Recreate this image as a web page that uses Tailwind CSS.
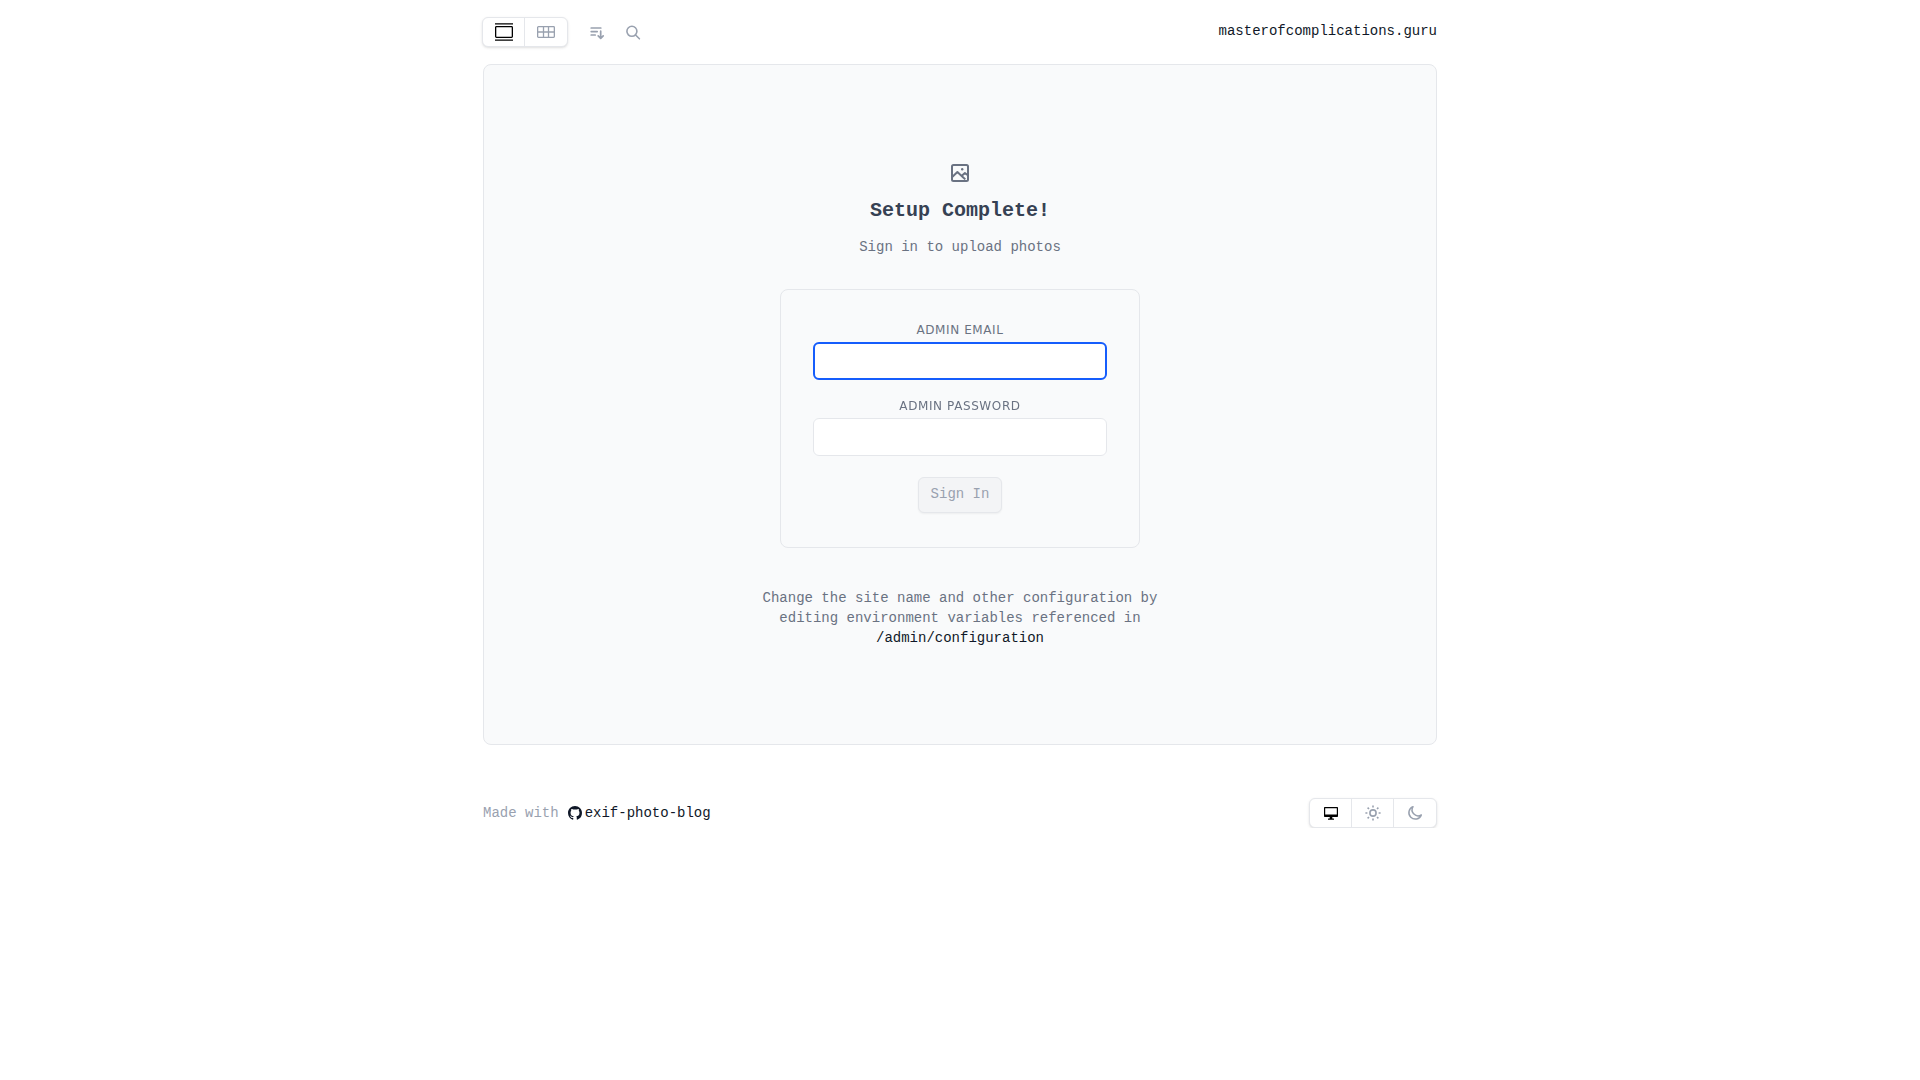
<!DOCTYPE html>
<html lang="en">
<head>
    <meta charset="UTF-8">
    <meta name="viewport" content="width=device-width, initial-scale=1.0">
    <title>masterofcomplications.guru</title>

    <!-- Tailwind CSS -->
    <script src="https://cdn.jsdelivr.net/npm/@tailwindcss/browser@4"></script>
</head>
<body class="bg-white font-['Liberation_Mono',monospace] text-sm text-gray-900">

    <div class="mx-auto w-full max-w-[954px]">

        <!-- Navigation -->
        <header class="flex h-16 items-center justify-between">
            <div class="flex items-center">
                <nav class="-ml-px flex h-[30px] overflow-hidden rounded-md border border-gray-200 bg-white shadow-sm">
                    <a href="#" aria-label="Full frame" class="flex w-[42px] items-center justify-center border-r border-gray-200 text-black">
                        <svg class="h-[18px] w-[19px]" viewBox="0 0 19 18" fill="none" stroke="currentColor">
                            <path d="M1 .9h18M1 17.100h18" stroke-width="1.400"/>
                            <rect x="1.650" y="3.650" width="16.700" height="10.700" rx=".8" stroke-width="1.300"/>
                        </svg>
                    </a>
                    <a href="#" aria-label="Grid" class="flex w-[42px] items-center justify-center text-gray-400 hover:text-gray-700">
                        <svg class="h-3 w-[18px]" viewBox="0 0 18 12" fill="none" stroke="currentColor" stroke-width="1.3">
                            <rect x=".65" y=".65" width="16.7" height="10.7" rx=".8"/>
                            <path d="M6.500.6v10.800M11.500.6v10.800M.6 6h16.800"/>
                        </svg>
                    </a>
                </nav>
                <button type="button" aria-label="Sort" class="ml-5 flex size-[18px] items-center justify-center text-gray-400 hover:text-gray-700">
                    <svg class="size-[18px]" viewBox="0 0 18 18" fill="none" stroke="currentColor" stroke-width="1.7" stroke-linecap="round" stroke-linejoin="round">
                        <path d="M3.200 5h9.600M3.200 8.600h6M3.200 12h4M12.700 8.200v6.800M10.200 12.800l2.500 2.500 2.500-2.500"/>
                    </svg>
                </button>
                <button type="button" aria-label="Search" class="ml-[18px] flex size-[18px] items-center justify-center text-gray-400 hover:text-gray-700">
                    <svg class="size-[18px]" viewBox="0 0 18 18" fill="none" stroke="currentColor" stroke-width="1.6" stroke-linecap="round">
                        <circle cx="7.900" cy="8.300" r="5"/>
                        <path d="M11.600 12l3.800 3.800"/>
                    </svg>
                </button>
            </div>
            <a href="#" class="pb-0.5 leading-5">masterofcomplications.guru</a>
        </header>

        <!-- Setup card -->
        <main class="flex flex-col items-center rounded-lg border border-gray-200 bg-gray-50 px-4 py-24 text-center text-gray-500">
            <svg class="size-6" viewBox="0 0 24 24" fill="none" stroke="currentColor" stroke-width="2" stroke-linejoin="round">
                <rect x="4" y="4" width="16" height="16" rx="1.500"/>
                <path d="M4.200 16l5.200-4.900 5.600 5.100 2.300 2.200M13.800 14.700l3.100-2.700 3.300 2.500"/>
                <circle cx="14.200" cy="8.300" r="1.200" fill="currentColor" stroke="none"/>
            </svg>
            <h1 class="mt-3 text-xl/7 font-bold text-gray-700">Setup Complete!</h1>
            <p class="mt-3 leading-5">Sign in to upload photos</p>

            <form class="mt-8 flex w-full max-w-[360px] flex-col items-center rounded-lg border border-gray-200 px-8 pt-8 pb-[34px]">
                <div class="flex w-full flex-col gap-[18px]">
                    <div class="flex flex-col gap-1">
                        <label for="email" class="font-['DejaVu_Sans',sans-serif] text-xs/4 tracking-wider uppercase">Admin Email</label>
                        <input id="email" type="email" autofocus class="h-[38px] w-full rounded-md border border-gray-200 bg-white px-3 text-gray-900 focus:outline-2 focus:-outline-offset-2 focus:outline-blue-600">
                    </div>
                    <div class="flex flex-col gap-1">
                        <label for="password" class="font-['DejaVu_Sans',sans-serif] text-xs/4 tracking-wider uppercase">Admin Password</label>
                        <input id="password" type="password" class="h-[38px] w-full rounded-md border border-gray-200 bg-white px-3 text-gray-900 focus:outline-2 focus:-outline-offset-2 focus:outline-blue-600">
                    </div>
                </div>
                <button type="submit" disabled class="mt-[21px] h-9 rounded-md border border-gray-200 bg-gray-100 px-3 pb-0.5 leading-5 text-gray-400 shadow-xs disabled:cursor-not-allowed">Sign In</button>
            </form>

            <p class="mt-10 max-w-[400px] leading-5">
                Change the site name and other configuration by editing environment variables referenced in
                <a href="#" class="block text-gray-900">/admin/configuration</a>
            </p>
        </main>

        <!-- Footer -->
        <footer class="mt-[53px] flex items-center justify-between">
            <div class="flex items-center leading-5">
                <span class="text-gray-400">Made with</span>
                <a href="#" class="ml-[9px] flex items-center gap-[3px]">
                    <svg class="size-3.5" viewBox="0 0 16 16" fill="currentColor">
                        <path d="M8 0C3.58 0 0 3.58 0 8c0 3.54 2.29 6.53 5.47 7.59.4.07.55-.17.55-.38 0-.19-.01-.82-.01-1.49-2.01.37-2.53-.49-2.69-.94-.09-.23-.48-.94-.82-1.13-.28-.15-.68-.52-.01-.53.63-.01 1.08.58 1.23.82.72 1.21 1.87.87 2.33.66.07-.52.28-.87.51-1.07-1.78-.2-3.64-.89-3.64-3.95 0-.87.31-1.59.82-2.15-.08-.2-.36-1.02.08-2.12 0 0 .67-.21 2.2.82.64-.18 1.32-.27 2-.27s1.36.09 2 .27c1.53-1.04 2.2-.82 2.2-.82.44 1.1.16 1.92.08 2.12.51.56.82 1.27.82 2.15 0 3.07-1.87 3.75-3.65 3.95.29.25.54.73.54 1.48 0 1.07-.01 1.93-.01 2.2 0 .21.15.46.55.38A8.01 8.01 0 0 0 16 8c0-4.42-3.58-8-8-8z"/>
                    </svg>
                    <span>exif-photo-blog</span>
                </a>
            </div>

            <div class="flex h-[30px] overflow-hidden rounded-md border border-gray-200 bg-white shadow-sm">
                <button type="button" aria-label="System theme" class="flex w-[42px] items-center justify-center border-r border-gray-200 text-black">
                    <svg class="h-3.5 w-[15px]" viewBox="0 0 15 14" fill="currentColor">
                        <path fill-rule="evenodd" d="M2 1h12c.6 0 1 .4 1 1v8c0 .6-.4 1-1 1H9.300v1.500H10.500c.4 0 .6.3.6.7s-.2.600-.6.600H5.500c-.4 0-.6-.2-.6-.600s.2-.7.6-.7h1.200V11H2c-.6 0-1-.4-1-1V2c0-.6.4-1 1-1zM2.200 2.200V8.500H13.800V2.200z"/>
                    </svg>
                </button>
                <button type="button" aria-label="Light theme" class="flex w-[42px] items-center justify-center border-r border-gray-200 text-gray-400 hover:text-gray-700">
                    <svg class="h-4 w-[17px]" viewBox="0 0 17 16" fill="none" stroke="currentColor" stroke-width="1.6">
                        <circle cx="9" cy="8" r="3.100"/>
                        <path d="M9 .4v2M9 13.600v2M1.400 8h2M14.600 8h2M3.600 2.600l1.400 1.400M13 12l1.400 1.400M3.600 13.400l1.400-1.400M13 4l1.400-1.400"/>
                    </svg>
                </button>
                <button type="button" aria-label="Dark theme" class="flex w-[42px] items-center justify-center text-gray-400 hover:text-gray-700">
                    <svg class="size-4" viewBox="0 0 16 16" fill="none" stroke="currentColor" stroke-width="1.5" stroke-linejoin="round">
                        <path d="M6 1.700A6.400 6.400 0 1 0 14.300 9.900A6 6 0 0 1 6 1.700z"/>
                    </svg>
                </button>
            </div>
        </footer>
    </div>

</body>
</html>
